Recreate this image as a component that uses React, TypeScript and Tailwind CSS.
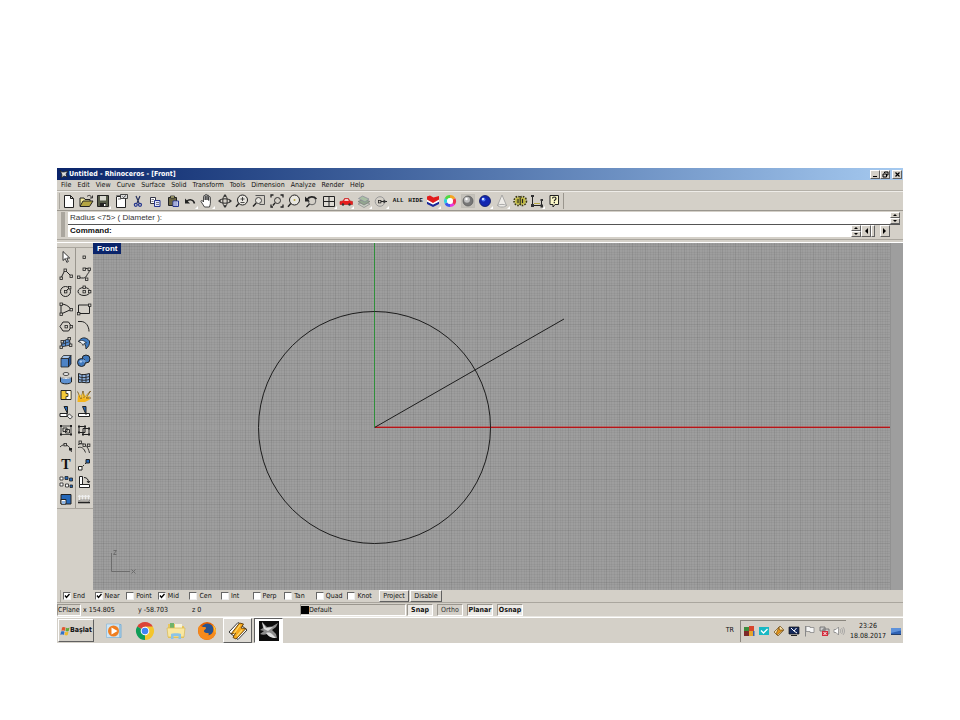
import type { ReactNode } from "react";

type Tool = { name: string; icon: ReactNode };

const menus = [
  "File",
  "Edit",
  "View",
  "Curve",
  "Surface",
  "Solid",
  "Transform",
  "Tools",
  "Dimension",
  "Analyze",
  "Render",
  "Help",
];

const snaps = [
  { name: "End", on: true },
  { name: "Near", on: true },
  { name: "Point", on: false },
  { name: "Mid", on: true },
  { name: "Cen", on: false },
  { name: "Int", on: false },
  { name: "Perp", on: false },
  { name: "Tan", on: false },
  { name: "Quad", on: false },
  { name: "Knot", on: false },
];

const raised =
  "border border-t-white border-l-white border-b-[#606060] border-r-[#606060] bg-[#d4d0c8]";
const sunken = "border border-t-[#9a968e] border-l-[#9a968e] border-b-white border-r-white";

const Icon = ({ children }: { children: ReactNode }) => (
  <svg viewBox="0 0 16 16" className="size-4 shrink-0" fill="none" stroke="#222" aria-hidden="true">
    {children}
  </svg>
);

// small square control point used by the curve tools
const Dot = ({ x, y }: { x: number; y: number }) => (
  <rect x={x - 1} y={y - 1} width="2.4" height="2.4" fill="#d4d0c8" stroke="#222" strokeWidth=".8" />
);

const Flyout = () => <path d="M16 13v3h-3z" fill="#fff" stroke="none" />;

const Lens = () => (
  <>
    <circle cx="8.5" cy="7" r="5" fill="#e8e6e0" />
    <path d="M4.800 10.500 2 13.800" strokeWidth="1.400" />
  </>
);

const mainTools: Tool[] = [
  { name: "New", icon: <path d="M3.500 2.500h6l3 3v9h-9zM9.500 2.500v3h3" fill="#fff" /> },
  {
    name: "Open",
    icon: (
      <>
        <path d="M2 13V5h4l1 1.500h5V8" fill="#f4ec9a" />
        <path d="M2 13.500 5 8h10l-3.500 5.500z" fill="#b5a642" />
        <path d="M9 3.500c2-2 4-1 4.500 1M14.500 2.500v2.500h-2.500" strokeWidth=".9" />
      </>
    ),
  },
  {
    name: "Save",
    icon: (
      <>
        <path d="M2.500 2.500h11v11h-11z" fill="#555a48" />
        <path d="M5 3h6v4.500H5z" fill="#d8d8d0" stroke="none" />
        <path d="M5 10h6v3.500H5z" fill="#222" stroke="none" />
        <path d="M9 11h1.500v2H9z" fill="#fff" stroke="none" />
        <Flyout />
      </>
    ),
  },
  {
    name: "Properties",
    icon: (
      <>
        <path d="M3.500 3.500h9v11h-9z" fill="#fff" />
        <path d="M3.500 4V2.500H7M5 6h3" stroke="#777" />
        <path d="M7.500 1.500h7v4h-7z" fill="#ddd" strokeWidth=".8" />
        <path d="m9.500 3.500 1 1 2.500-2" strokeWidth=".8" />
      </>
    ),
  },
  {
    name: "Cut",
    icon: (
      <>
        <path d="m6 3 3 7M10 3 7 10" stroke="#26305c" strokeWidth="1.200" />
        <circle cx="5.800" cy="11.800" r="1.500" stroke="#24358e" strokeWidth="1.200" />
        <circle cx="10" cy="11.800" r="1.500" stroke="#24358e" strokeWidth="1.200" />
      </>
    ),
  },
  {
    name: "Copy",
    icon: (
      <>
        <path d="M3.500 4.500h5v6h-5z" fill="#fff" stroke="#334" />
        <path d="M7.500 7.500h5.500v6H7.500z" fill="#dfe4ff" stroke="#24358e" />
        <path d="M9 9.500h3M9 11.500h3M4.500 6.500h2.500M4.500 8.500h2" stroke="#556" strokeWidth=".8" />
      </>
    ),
  },
  {
    name: "Paste",
    icon: (
      <>
        <path d="M3.500 4.500h8v8h-8z" fill="#6a6442" />
        <path d="M5.500 3h4v2h-4z" fill="#d9d48d" strokeWidth=".8" />
        <path d="M8 8h5.500v5.500H8z" fill="#e8ebff" stroke="#24358e" />
        <path d="M9 10h3.500M9 12h3.500" stroke="#24358e" strokeWidth=".7" />
      </>
    ),
  },
  {
    name: "Undo",
    icon: (
      <>
        <path d="M4.500 8.500c2.500-2.500 7-2.500 8 2" strokeWidth="1.500" />
        <path d="M3 5.500v5h5z" fill="#222" stroke="none" />
        <Flyout />
      </>
    ),
  },
  {
    name: "Pan",
    icon: (
      <>
        <path
          d="M5.500 14 2 8.500c0-1.500 1.500-1.200 2.500.5V3.500c0-1.300 1.700-1.300 1.700 0V7 2.300c0-1.300 1.800-1.300 1.800 0V7 3c0-1.300 1.700-1.300 1.700 0v4.500-3c0-1.200 1.700-1.200 1.700 0v6L10.500 14z"
          fill="#fff"
          strokeWidth=".8"
        />
        <Flyout />
      </>
    ),
  },
  {
    name: "Rotate view",
    icon: (
      <>
        <ellipse cx="8" cy="8" rx="5.500" ry="2.200" strokeWidth=".9" />
        <ellipse cx="8" cy="8" rx="2.200" ry="5" strokeWidth=".9" />
        <path d="m8 1 2 2.500H6zM8 15l2-2.500H6zM1 8l2.500-2v4zM15 8l-2.500-2v4z" fill="#333" stroke="none" />
      </>
    ),
  },
  {
    name: "Zoom dynamic",
    icon: (
      <>
        <Lens />
        <path d="M6.500 6h4M8.500 4v4M6.500 9.500h4" strokeWidth=".8" />
      </>
    ),
  },
  {
    name: "Zoom window",
    icon: (
      <>
        <path d="M4.500 2.500h9v9h-5" stroke="#555" />
        <circle cx="7.500" cy="7.500" r="3" fill="#e8e6e0" stroke="#444" />
        <path d="M5.200 10 2 13.500" strokeWidth="1.400" />
      </>
    ),
  },
  {
    name: "Zoom extents",
    icon: (
      <>
        <circle cx="8.500" cy="7.500" r="3" strokeWidth=".9" />
        <path d="M6 10 3.800 12.500" strokeWidth="1.300" />
        <path d="M2 4.500V2h2.500M11.500 2H14v2.500M14 11.500V14h-2.500M2 11.500V14h2" strokeWidth="1.300" />
      </>
    ),
  },
  {
    name: "Zoom selected",
    icon: (
      <>
        <Lens />
        <circle cx="8.500" cy="7" r="1" fill="#b5a642" stroke="none" />
      </>
    ),
  },
  {
    name: "Undo view change",
    icon: (
      <>
        <circle cx="9" cy="8" r="3.800" stroke="#666" />
        <path d="M6.500 11 3.500 14" strokeWidth="1.300" />
        <path d="M4 6.500C6 3 11 3 13.500 6" strokeWidth="1.500" />
        <path d="M2 3.500v5h5z" fill="#222" stroke="none" />
      </>
    ),
  },
  {
    name: "Four viewports",
    icon: (
      <>
        <path d="M2.500 3.500h11v10h-11zM8 3.500v10M2.500 8.500h11" fill="#dedbd4" />
        <Flyout />
      </>
    ),
  },
  {
    name: "Right view",
    icon: (
      <>
        <path d="M2 8.500 5 8l1.500-2.500h4L12 8l2.500.5v3H2z" fill="#e81c1c" stroke="#c01414" strokeWidth=".6" />
        <path d="M7 6.300h3l.8 1.500H6.200z" fill="#fff" stroke="none" />
        <circle cx="5" cy="11.500" r="1.200" fill="#333" stroke="none" />
        <circle cx="11.500" cy="11.500" r="1.200" fill="#333" stroke="none" />
        <Flyout />
      </>
    ),
  },
  {
    name: "Set CPlane",
    icon: (
      <>
        <path d="m2 11 6 3.500 6-3.500-6-2.500z" fill="#c9cfc4" stroke="#888" strokeWidth=".7" />
        <path d="m2 8.500 6 3.500 6-3.500L8 6z" fill="#92a68f" stroke="#777" strokeWidth=".7" />
        <path d="m2.500 5.500 4-2.500 6.500 3-4 3z" fill="#a9bfa4" stroke="#889" strokeWidth=".7" />
        <Flyout />
      </>
    ),
  },
  {
    name: "Object snap",
    icon: (
      <>
        <circle cx="7" cy="8.500" r="4.800" stroke="#999" />
        <path d="M6 8.500h8" />
        <Dot x={6.500} y={8.500} />
        <path d="m10.500 6.500 3 2-3 2z" fill="#333" stroke="none" />
        <Flyout />
      </>
    ),
  },
  { name: "ALL", icon: null },
  { name: "HIDE", icon: null },
  {
    name: "Layers",
    icon: (
      <>
        <path d="m2 8.500 6 3 6-3V11l-6 3-6-3z" fill="#1c2a99" stroke="none" />
        <path d="m2 6.500 6 3 6-3v2l-6 3-6-3z" fill="#fff" stroke="none" />
        <path d="m2 3.500 3-1 3.500 2 5.500-1.500v3.500L8 10 2 6.500z" fill="#e21c1c" stroke="none" />
        <Flyout />
      </>
    ),
  },
  {
    name: "Object color",
    icon: (
      <>
        <g strokeWidth="3">
          <path d="M8 3.500A4.500 4.500 0 0 1 12 6" stroke="#f5a623" />
          <path d="M12 6a4.500 4.500 0 0 1-.5 5" stroke="#f03050" />
          <path d="M11.500 11A4.500 4.500 0 0 1 8 12.500" stroke="#e838e0" />
          <path d="M8 12.500A4.500 4.500 0 0 1 4 10" stroke="#3c58f0" />
          <path d="M4 10a4.500 4.500 0 0 1 0-4" stroke="#28d0e0" />
          <path d="M4 6a4.500 4.500 0 0 1 4-2.500" stroke="#50d840" />
        </g>
        <circle cx="8" cy="8" r="3" fill="#fff" stroke="none" />
      </>
    ),
  },
  {
    name: "Shade",
    icon: (
      <>
        <path d="M1.500 1.500h13v13h-13z" fill="#c4c1ba" stroke="#b5b2ab" strokeDasharray="1 1" />
        <circle cx="8" cy="8" r="5" fill="#777" stroke="#555" strokeWidth=".7" />
        <circle cx="7" cy="6.800" r="3" fill="#c0c0c0" stroke="none" />
        <circle cx="6.500" cy="6" r="1.200" fill="#fff" stroke="none" />
      </>
    ),
  },
  {
    name: "Render",
    icon: (
      <>
        <circle cx="8" cy="8" r="5.500" fill="#1226b0" stroke="#0a1560" strokeWidth=".8" />
        <circle cx="6.500" cy="6.500" r="2" fill="#4c74f0" stroke="none" />
        <circle cx="6" cy="6" r="1" fill="#fff" stroke="none" />
        <Flyout />
      </>
    ),
  },
  {
    name: "Spotlight",
    icon: (
      <>
        <path d="M8 2 3.500 12.500c1.500 2 7.500 2 9 0z" fill="#eeece8" stroke="#999" strokeWidth=".8" />
        <path d="M3.500 12.500c2-1.500 7-1.500 9 0" stroke="#999" strokeWidth=".8" />
        <Flyout />
      </>
    ),
  },
  {
    name: "Options",
    icon: (
      <>
        <ellipse cx="6" cy="8" rx="3.500" ry="4" stroke="#3a3812" strokeWidth="2.500" strokeDasharray="1.500 1" />
        <ellipse cx="10.500" cy="8" rx="3.500" ry="4" stroke="#3a3812" strokeWidth="2.500" strokeDasharray="1.500 1" />
        <ellipse cx="6" cy="8" rx="2.800" ry="3.300" fill="#b5ae3c" stroke="#d4ce58" strokeWidth=".8" />
        <ellipse cx="10.500" cy="8" rx="2.800" ry="3.300" fill="#b5ae3c" stroke="#d4ce58" strokeWidth=".8" />
        <path d="M6 6v4M10.500 6v4M8.200 5v6" />
      </>
    ),
  },
  {
    name: "Dimension",
    icon: (
      <>
        <path d="M3.500 3v9.500H14M12.500 7v6" />
        <path d="M2 2h3v2H2zM2 11h3v3H2zM11.500 6H14v2h-2.500zM11.500 11.500H14v3h-2.500z" fill="#333" stroke="none" />
        <path d="M5 10.500h6" stroke="#b5a642" />
        <Flyout />
      </>
    ),
  },
  {
    name: "Help topics",
    icon: (
      <>
        <path d="M4 2.500h8.500v9H9L7 14v-2.500H4z" fill="#fbf8c8" />
        <path d="M6.500 5.500c0-2 3.500-2 3.500 0 0 1.300-1.700 1.200-1.700 2.700M8.300 9v1.300" strokeWidth="1.200" />
      </>
    ),
  },
];

const sideTools: Tool[] = [
  { name: "Select", icon: <path d="M5 2.500v9l2.300-2 1.500 3.800 1.500-.7L8.800 9h2.900z" fill="#fff" strokeWidth=".9" /> },
  { name: "Point", icon: <Dot x={8} y={8} /> },
  {
    name: "Polyline",
    icon: (
      <>
        <path d="M3 12 7 4l6 6" />
        <Dot x={3} y={12} />
        <Dot x={7} y={4} />
        <Dot x={13} y={10} />
      </>
    ),
  },
  {
    name: "Curve",
    icon: (
      <>
        <path d="M8 2.500c6-1 6 3 4 5s-1 6-9 4" />
        <Dot x={8} y={3} />
        <Dot x={13} y={3} />
        <Dot x={2.500} y={11} />
        <Dot x={10.500} y={13} />
      </>
    ),
  },
  {
    name: "Circle",
    icon: (
      <>
        <circle cx="7.500" cy="8.500" r="5" />
        <path d="m7.500 8.500 4-4" />
        <Dot x={7.500} y={8.500} />
        <Dot x={11.500} y={4.500} />
      </>
    ),
  },
  {
    name: "Ellipse",
    icon: (
      <>
        <ellipse cx="8" cy="8.500" rx="6" ry="4" />
        <Dot x={8} y={8.500} />
        <Dot x={8} y={4} />
        <Dot x={13.500} y={8.500} />
      </>
    ),
  },
  {
    name: "Arc",
    icon: (
      <>
        <path d="M3 3c4 0 8 2 10 5.500L3 13z" />
        <Dot x={3} y={3} />
        <Dot x={13} y={8.500} />
        <Dot x={3} y={13} />
      </>
    ),
  },
  {
    name: "Rectangle",
    icon: (
      <>
        <path d="M2.500 4h11v8.500h-11z" />
        <Dot x={13.500} y={4} />
        <Dot x={2.500} y={12.500} />
      </>
    ),
  },
  {
    name: "Polygon",
    icon: (
      <>
        <path d="M5 4h5.500l3 4.500-3 4.500H5L2 8.500z" />
        <Dot x={8} y={8.500} />
        <Dot x={13} y={8.500} />
      </>
    ),
  },
  { name: "Fillet curves", icon: <path d="M2 3.500h3c5 0 8 5 8 10" strokeWidth="1" /> },
  {
    name: "Surface",
    icon: (
      <>
        <path d="m4 6.500 7-3 1.500 6.500L3 12z" fill="#5b8fd0" strokeWidth=".8" />
        <path d="m3.500 9.500 8.500-3M7.500 5v6" strokeWidth=".7" />
        <Dot x={11} y={3.500} />
        <Dot x={4} y={6.500} />
        <Dot x={3} y={12} />
        <Dot x={12.500} y={10} />
      </>
    ),
  },
  {
    name: "Sweep",
    icon: (
      <>
        <path d="M2.500 6.500C5 2 10 1.500 13.500 6c.5 3-1 6-3.500 8 0-3-1-6-4-6.500z" fill="#3f7cc4" strokeWidth=".9" />
        <path d="M2.500 6.500c2.500-2 6-1 8 1.500-1.500-.5-3 .5-3.500 2.500C6 8 4.500 7 2.500 6.500z" fill="#eef3fa" strokeWidth=".7" />
      </>
    ),
  },
  {
    name: "Box",
    icon: (
      <>
        <path d="M3 5.500h7.500V14H3z" fill="#4d83c6" strokeWidth=".8" />
        <path d="m3 5.500 2.500-3h7.500l-2.500 3z" fill="#a9c8ec" strokeWidth=".8" />
        <path d="m10.500 5.500 2.500-3V11l-2.500 3z" fill="#1d4f96" strokeWidth=".8" />
      </>
    ),
  },
  {
    name: "Boolean union",
    icon: (
      <>
        <circle cx="10" cy="6" r="4" fill="#3f78bc" />
        <circle cx="5.500" cy="9.500" r="4" fill="#3f78bc" />
        <path d="m6.500 7 3 2" stroke="#6f9fd8" strokeWidth="2.500" />
        <circle cx="4.800" cy="8.500" r="1.300" fill="#a9c8ec" stroke="none" />
      </>
    ),
  },
  {
    name: "Cylinder surface",
    icon: (
      <>
        <path d="M2.500 7v5c2 2.500 9 2.500 11 0V7c-2 2-9 2-11 0z" fill="#5d91d1" />
        <path d="M2.500 7c2 2 9 2 11 0" stroke="#dfe9f5" />
        <ellipse cx="8" cy="4" rx="3" ry="1.500" fill="#eee" strokeWidth=".8" />
      </>
    ),
  },
  {
    name: "Mesh",
    icon: (
      <>
        <path d="M2.500 3.500c4 2 7 1 11 0v9c-4 1-7-1-11 0z" fill="#8fb3e0" />
        <path d="M2.500 6.500c4 2 7 1 11 0M2.500 9.500c4 1 7 1 11 0M6 4.500v8M10 4.500v8" strokeWidth=".9" />
      </>
    ),
  },
  {
    name: "Explode layout",
    icon: (
      <>
        <path d="M3 3.500h10v9H3z" fill="#f4c93a" />
        <path d="M8 4h4.500v8H8V9.500h2v-3H8z" fill="#fff" stroke="none" />
        <path d="M8 4v2.500h2v3H8V12" strokeWidth=".8" />
      </>
    ),
  },
  {
    name: "Explode",
    icon: (
      <>
        <path d="m1.500 15 .5-7 4 3 2-5 1.500 4 5-1-2 2 1.500 1.500L9 15z" fill="#f5b51c" stroke="none" />
        <path d="M1.500 4.500 5 12l2-8 1 7 6.500-7L10 11h5" stroke="#6a4a10" strokeWidth=".8" />
        <path d="m2.500 6 2.500 6 2-7 1 6 4.500-5L9.500 12z" fill="#f9c83c" stroke="none" />
      </>
    ),
  },
  {
    name: "Trim",
    icon: (
      <>
        <path d="M2 8.500h7v3H2z" fill="#fff" />
        <path d="M6 1.500h3.500v7z" fill="#2467b8" />
        <path d="m9 11 2.500-2 3 3-2.500 2z" fill="#eee" strokeWidth=".8" />
      </>
    ),
  },
  {
    name: "Split",
    icon: (
      <>
        <path d="M2.500 8.500h11v3h-11z" fill="#fff" />
        <path d="M6.500 1.500H10v8z" fill="#2467b8" />
      </>
    ),
  },
  {
    name: "Group",
    icon: (
      <>
        <path d="M3 4h10v8.500H3z" strokeWidth=".8" />
        <path d="M5 6h4v3.500H5zM7.500 7.500h4v3.500h-4z" strokeWidth=".9" />
        <path d="M2 3h2v2H2zM12 3h2v2h-2zM2 11.500h2v2H2zM12 11.500h2v2h-2z" fill="#222" stroke="none" />
      </>
    ),
  },
  {
    name: "Ungroup",
    icon: (
      <>
        <path d="M3 4.500h6v6H3zM7 6.500h6v6H7z" />
        <path d="M2 3.500h2v2H2zM8 3.500h2v2H8zM2 9.500h2v2H2zM12 5.500h2v2h-2zM12 11.500h2v2h-2zM6 11.500h2v2H6z" fill="#222" stroke="none" />
      </>
    ),
  },
  {
    name: "Edit points",
    icon: (
      <>
        <path d="M2 8c4-4.500 10-2 11.500 5" strokeWidth=".9" />
        <Dot x={7} y={5.500} />
        <path d="M11 9h3v2.500h-3z" fill="#222" stroke="none" />
      </>
    ),
  },
  {
    name: "Control points",
    icon: (
      <>
        <path d="M2 5.500C8 3 12 7 13.500 14M2 8.500c4-1 6 1 7.500 5" strokeWidth=".9" />
        <Dot x={4} y={3} />
        <Dot x={8} y={6} />
        <Dot x={12.500} y={6} />
      </>
    ),
  },
  { name: "Text", icon: null },
  {
    name: "Move",
    icon: (
      <>
        <path d="M4 12 12 4" strokeDasharray="2 1.500" />
        <path d="M2.500 9.500H6V13H2.500z" fill="#fff" />
        <path d="M10 2.500h3.500V6H10z" fill="#2467b8" />
      </>
    ),
  },
  {
    name: "Array",
    icon: (
      <>
        <path d="M2 3h3v3H2zM7.500 10h3v3h-3zM2 9h3v3H2z" fill="#fff" strokeWidth=".8" />
        <path d="M7 2.500h3v3H7zM11.500 4h3v3h-3zM12 11h2.500v2.500H12z" fill="#2467b8" strokeWidth=".8" />
      </>
    ),
  },
  {
    name: "Orient",
    icon: (
      <>
        <path d="M3.500 2.500h3v8h-3z" fill="#fff" />
        <path d="M3.500 10.500h10v3h-10z" fill="#fff" />
        <path d="M8 3.500c3 0 4.500 2 4.500 5M11 7l1.500 2L14 7" />
      </>
    ),
  },
  {
    name: "Align",
    icon: (
      <>
        <path d="M3 3.500h10v9.500H3z" fill="#2467b8" />
        <path d="M3 8.500h5V13H3z" fill="#fff" />
        <path d="M4 10h3v3H4z" fill="#8fb6e4" stroke="none" />
      </>
    ),
  },
  {
    name: "Project to plane",
    icon: (
      <>
        <path d="M3.500 4v5M6.500 4v5M9.500 4v5M12.500 4v5M2 6l1.500-2L5 6l1.500-2L8 6l1.500-2L11 6l1.500-2L14 6" stroke="#eee" />
        <path d="M2 11.500h12" strokeWidth="1.600" />
        <path d="m2 10 3-1h9l-2 2" stroke="#777" strokeWidth=".7" />
      </>
    ),
  },
];

const ToolButton = ({ tool }: { tool: Tool }) => (
  <button type="button" aria-label={tool.name} className="flex min-w-0 items-center justify-center overflow-hidden">
    {tool.icon ? (
      <Icon>{tool.icon}</Icon>
    ) : tool.name === "Text" ? (
      <span className="font-['Liberation_Serif',serif] text-[14px] font-bold leading-4">T</span>
    ) : (
      <span className="font-['Liberation_Mono',monospace] text-[6px] font-bold leading-3">{tool.name}</span>
    )}
  </button>
);

const TitleBar = () => (
  <header className="flex h-3 items-center bg-linear-to-r from-[#0a246a] to-[#a6caf0] pr-px pl-0.5 text-white">
    <svg viewBox="0 0 10 10" className="size-[10px]" aria-hidden="true">
      <path d="M1 1c1 2 2 2 4 2l4-1-2 3 1 3-3-1-3 2 1-3z" fill="#ddd" stroke="#222" strokeWidth=".8" />
    </svg>
    <h1 className="flex-1 text-[7px] font-bold leading-3">Untitled - Rhinoceros - [Front]</h1>
    <button type="button" aria-label="Minimize" className={`${raised} flex h-[9px] w-[10px] items-end justify-center pb-px`}>
      <span className="h-px w-1 bg-black" />
    </button>
    <button type="button" aria-label="Restore" className={`${raised} mr-0.5 flex h-[9px] w-[10px] items-center justify-center`}>
      <svg viewBox="0 0 7 7" className="size-[7px]" fill="none" stroke="#000" aria-hidden="true">
        <path d="M2.500 2V1h3.500v3H5M1 3h3.500v3H1z" />
      </svg>
    </button>
    <button type="button" aria-label="Close" className={`${raised} flex h-[9px] w-[10px] items-center justify-center`}>
      <svg viewBox="0 0 7 7" className="size-[7px]" stroke="#000" aria-hidden="true">
        <path d="m1.500 1.500 4 4M5.500 1.500l-4 4" strokeWidth="1.200" />
      </svg>
    </button>
  </header>
);

const Spinner = () => (
  <div className="flex h-full w-[10px] flex-col">
    {["M1 3h4L3 1z", "M1 1h4L3 3z"].map((d, i) => (
      <button
        key={d}
        type="button"
        aria-label={i === 0 ? "Scroll up" : "Scroll down"}
        className={`${raised} flex flex-1 items-center justify-center`}
      >
        <svg viewBox="0 0 6 4" className="h-1 w-1.5" aria-hidden="true">
          <path d={d} />
        </svg>
      </button>
    ))}
  </div>
);

const CommandArea = () => (
  <section className="flex h-[28px] border-t border-[#9a968e] py-px pr-[3px] pl-1 font-['Liberation_Sans',Arial,sans-serif] text-[8px]">
    <div className="mr-[3px] w-1 bg-[#aaa69e]" />
    <div className="flex min-w-0 flex-1 flex-col">
      <div className="flex h-[13px] border-b border-[#555]">
        <p className="flex-1 bg-white pl-0.5 leading-3 text-[#333]">Radius &lt;75&gt; ( Diameter ):</p>
        <Spinner />
      </div>
      <div className="mr-[10px] flex h-3">
        <label className="bg-white pl-0.5 font-bold leading-[11px]" htmlFor="command">
          Command:
        </label>
        <input id="command" className="min-w-0 flex-1 bg-white px-1 outline-none" />
        <Spinner />
        <button type="button" aria-label="Scroll left" className={`${raised} flex w-[10px] items-center justify-center`}>
          <svg viewBox="0 0 4 6" className="h-1.5 w-1" aria-hidden="true">
            <path d="M4 0v6L1 3z" />
          </svg>
        </button>
        <div className={`${raised} mr-[5px] w-1`} />
        <button type="button" aria-label="Scroll right" className={`${raised} flex w-[10px] items-center justify-center`}>
          <svg viewBox="0 0 4 6" className="h-1.5 w-1" aria-hidden="true">
            <path d="M0 0v6l3-3z" />
          </svg>
        </button>
      </div>
    </div>
  </section>
);

const ORIGIN = { x: 281, y: 184 };
const CELL = 2.58;

// five minor divisions to each major one, counted outwards from the origin
const gridPath = (major: boolean) => {
  let d = "";
  for (let i = -108; i <= 200; i++) {
    if ((i % 5 === 0) === major) d += `M${Math.round(ORIGIN.x + i * CELL) + 0.5} 0V347`;
  }
  for (let i = -71; i <= 63; i++) {
    // the x axis takes the place of the line through the origin
    if (i !== 0 && (i % 5 === 0) === major) d += `M0 ${Math.round(ORIGIN.y + i * CELL) + 0.5}H797`;
  }
  return d;
};

const Viewport = () => (
  <main className="relative h-[347px] min-w-0 flex-1 bg-[#9e9e9e]">
    <svg viewBox="0 0 810 347" className="size-full" preserveAspectRatio="xMinYMin slice" fill="none">
      <path d={gridPath(false)} stroke="#000" strokeOpacity=".035" />
      <path d={gridPath(true)} stroke="#000" strokeOpacity=".08" />
      <path d="M281.500 0v184" stroke="#2f8f3a" />
      <path d="M282 184H797" stroke="#c81818" strokeWidth="2" strokeOpacity=".4" />
      <path d="M282 184.500H797" stroke="#b81418" />
      <circle cx="281.500" cy="184.500" r="116" stroke="#1c1c1c" />
      <path d="M281.500 184.500 471 76" stroke="#1c1c1c" />
      <path d="M18.500 310v18.500H37" stroke="#6c6c6c" />
      <path d="M20.500 307.500h3l-3 4h3M38.500 326.500l4 4M42.500 326.500l-4 4" stroke="#6c6c6c" />
    </svg>
    <h2 className="absolute top-0 left-0 bg-[#0a246a] px-1 font-['Liberation_Sans',Arial,sans-serif] text-[8px] font-bold leading-[11px] text-white">
      Front
    </h2>
  </main>
);

const SnapBar = () => (
  <form className="flex h-[13px] items-center border-b border-[#aaa69e] pl-[3px] text-[7px]">
    <div className="mr-0.5 h-3 w-px bg-[#aaa69e]" />
    <div className="grid w-[316px] grid-cols-10">
      {snaps.map((snap) => (
        <label key={snap.name} className="relative flex items-center gap-0.5 leading-3">
          <input
            type="checkbox"
            defaultChecked={snap.on}
            className="peer size-2 appearance-none border border-t-[#666] border-r-[#eee] border-b-[#eee] border-l-[#666] bg-white"
          />
          <svg viewBox="0 0 8 8" className="pointer-events-none absolute left-0 hidden size-2 peer-checked:block" fill="none" stroke="#000" aria-hidden="true">
            <path d="m2 3.500 1.500 2L6.500 2" strokeWidth="1.300" />
          </svg>
          {snap.name}
        </label>
      ))}
    </div>
    <button type="button" className={`${raised} h-3 w-[30px] leading-[10px]`}>
      Project
    </button>
    <button type="button" className={`${raised} ml-px h-3 w-8 leading-[10px]`}>
      Disable
    </button>
  </form>
);

const StatusBar = () => (
  <div className="flex h-[14px] items-center border-b border-[#e9e7e2] pt-px text-[7px] leading-[10px]">
    <span className={`${sunken} w-6`}>CPlane</span>
    <span className="w-[55px] pl-0.5">x 154.805</span>
    <span className="w-[54px] pl-0.5">y -58.703</span>
    <span className="w-[110px] pl-0.5">z 0</span>
    <button type="button" className={`${sunken} mr-px flex w-[106px] items-center`}>
      <span className="size-2 bg-black" />
      Default
    </button>
    <div className="grid grid-cols-4 gap-1">
      {["Snap", "Ortho", "Planar", "Osnap"].map((name) => (
        <button
          key={name}
          type="button"
          className={`${sunken} w-[26px] ${name === "Ortho" ? "text-[#333]" : "bg-[#ebe9e5] font-bold"}`}
        >
          {name}
        </button>
      ))}
    </div>
  </div>
);

const PinnedButton = ({ name, className = "", children }: { name: string; className?: string; children: ReactNode }) => (
  <button type="button" aria-label={name} className={`flex h-[25px] items-center justify-center border ${className}`}>
    <svg viewBox="0 0 20 20" className="size-5" fill="none" aria-hidden="true">
      {children}
    </svg>
  </button>
);

const TrayIcon = ({ children }: { children: ReactNode }) => (
  <svg viewBox="0 0 12 12" className="size-3" fill="none" aria-hidden="true">
    {children}
  </svg>
);

const Taskbar = () => (
  <footer className="flex h-[26px] items-center border-t border-white text-[7px]">
    <button type="button" className={`${raised} ml-px flex h-[23px] w-9 items-center justify-center font-bold`}>
      <svg viewBox="0 0 10 10" className="size-[10px] shrink-0" aria-hidden="true">
        <path d="M2 1.500c1.500-1 2.500-.5 3.500 0L4.800 5c-1-.5-2-.7-3.300 0z" fill="#e2552d" />
        <path d="M6 1.800c1 .5 2 .6 3.500-.2L8.700 5c-1 .7-2.200.5-3.200 0z" fill="#63a83c" />
        <path d="M1 5.700c1-.7 2.500-.5 3.500 0L3.800 9c-1-.5-2-.7-3.500 0z" fill="#3270c8" />
        <path d="M5.200 5.800c1 .5 2 .6 3.300 0L7.700 9c-1 .7-2 .5-3.200 0z" fill="#f0b92c" />
      </svg>
      Başlat
    </button>
    <nav className="ml-1 grid w-[186px] grid-cols-6">
      <PinnedButton name="Media Player" className="border-transparent">
        <path d="M5 3.500h12v13H5z" fill="#a9d0ea" stroke="#7db0d4" />
        <path d="M2.500 3h13v13.500h-13z" fill="#cfe5f4" stroke="#8ab9da" strokeWidth=".7" />
        <circle cx="9.500" cy="10" r="5.500" fill="#ef7e21" />
        <path d="m7.500 6.500 6 3.500-6 3.500z" fill="#fff" />
      </PinnedButton>
      <PinnedButton name="Chrome" className="border-transparent">
        <path d="M10 10 2.200 5.500a9 9 0 0 1 15.600 0z" fill="#db4437" />
        <path d="M10 10 2.200 5.500A9 9 0 0 0 10 19l3.500-7z" fill="#0f9d58" />
        <path d="M10 10 10 19a9 9 0 0 0 7.800-13.500H10z" fill="#f4c52c" />
        <circle cx="10" cy="10" r="4.300" fill="#fff" />
        <circle cx="10" cy="10" r="3.300" fill="#4285f4" />
      </PinnedButton>
      <PinnedButton name="Explorer" className="border-transparent">
        <path d="M2 3h7l1 2h8v12H2z" fill="#e9c75c" />
        <path d="M4 2h4v6H4z" fill="#6fb36a" />
        <path d="M9 3h7v6H9z" fill="#f7f3d8" />
        <path d="M1 7h18l-1 9H2z" fill="#f9e7a0" stroke="#d7b854" strokeWidth=".7" />
        <path d="M5 18v-5c0-1 10-1 10 0v5h-2.500v-3h-5v3z" fill="#8cc4e6" />
      </PinnedButton>
      <PinnedButton name="Firefox" className="border-transparent">
        <circle cx="10" cy="10" r="9" fill="#e66000" />
        <circle cx="10.500" cy="8.500" r="6" fill="#28528f" />
        <path d="M1.500 6C3 3 4 6 7 6c2 0 3 1 1 2.500-2 1-1 3.500 1.500 3.500 3 0 3 1.500 1 2.500 4 0 6-3 6-6.500 0-2-1-4-2.500-5C18 4 20 9 18.500 13 16 20 5 21 2 14 1 11 1 8 1.500 6z" fill="#f58a1c" />
        <path d="M16 4c3 3 3 6 2 9 0-3-1-5-2-9z" fill="#ffd23c" />
      </PinnedButton>
      <PinnedButton
        name="Winamp"
        className="mx-px border-t-white border-r-[#606060] border-b-[#606060] border-l-white bg-[#dedbd5]"
      >
        <path d="m1 11 9-9.500L19 9l-9 9.500z" fill="#fff" stroke="#333" />
        <path d="m3 13 8.500-11 4 1-2.500 4 5 .5L8 18l-3-1.500L7.500 12z" fill="#f6a81c" stroke="#5a3a08" strokeWidth=".9" />
        <path d="M6 12.500 12 4M9 15l5-6" stroke="#ffd866" strokeWidth="1.300" />
      </PinnedButton>
      <PinnedButton
        name="Rhinoceros"
        className="mx-px border-t-[#606060] border-r-white border-b-white border-l-[#606060] bg-white"
      >
        <path d="M0 0h20v20H0z" fill="#0c0c0c" />
        <path d="m3 1 5 5 5-.5 6-3.500-2 4-4 3 4 4 1 4c-5 0-8-2-10-4-2 1-5 1-7 0l4-3-4-1 3-2z" fill="#8c8c8c" />
        <path d="m3 1 4 6 7-1-5 4-4-2zM7 12c3-1 5 0 6 1l4 4c-5 0-8-2-10-5z" fill="#dedede" />
      </PinnedButton>
    </nav>
    <div className="ml-auto flex h-full items-center">
      <span className="mr-1.5">TR</span>
      <div className="flex h-[22px] items-center gap-[3px] border-t border-l border-[#8a867e] pr-px pl-0.5">
        <TrayIcon>
          <path d="M1 2h5v4H1z" fill="#3c8c3c" />
          <path d="M6 1h5v5H6z" fill="#d8452c" />
          <path d="M1 6h5v5H1z" fill="#7d2a2a" />
          <path d="M6 6h4v5H6z" fill="#e6a52c" />
          <path d="M10 6h1.500v5H10z" fill="#3b62b6" />
        </TrayIcon>
        <TrayIcon>
          <path d="M1 2h10v8H1z" fill="#18b8c4" />
          <path d="m3 5.500 2.500 2.500L9.500 4" stroke="#fff" strokeWidth="1.300" />
        </TrayIcon>
        <TrayIcon>
          <path d="m1 7 6-6 4 4-6 6z" fill="#f6dfa8" stroke="#7a5a28" strokeWidth=".8" />
          <path d="m3 9 3-7 .5 3H10l-6 5z" fill="#e8971c" stroke="#6a4208" strokeWidth=".6" />
        </TrayIcon>
        <TrayIcon>
          <path d="M1 2h10v7H1z" fill="#162a5c" stroke="#111" strokeWidth=".7" />
          <path d="M3 10.500h6" stroke="#222" />
          <path d="m3 3 3 3M8.500 3 6 6l3 2" stroke="#fff" />
        </TrayIcon>
        <TrayIcon>
          <path d="M2.500 1v10.500" stroke="#888" />
          <path d="M3 1.500h4v1h4v5H7v-1H3z" fill="#f5f5f5" stroke="#888" strokeWidth=".8" />
        </TrayIcon>
        <TrayIcon>
          <path d="M2 2h5v4H2zM5 4h6v5H5z" fill="#ccc" stroke="#666" strokeWidth=".8" />
          <path d="M4 6h6v5H4z" fill="#d22c3c" />
          <path d="m5.500 7 3 3M8.500 7l-3 3" stroke="#fff" />
        </TrayIcon>
        <TrayIcon>
          <path d="M1 4.500h2L5.500 2v8L3 7.500H1z" fill="#fff" stroke="#888" strokeWidth=".8" />
          <path d="M7 4c1 1.500 1 2.500 0 4M8.500 3c1.500 2 1.500 4 0 6M10 2c2 2.500 2 5.500 0 8" stroke="#999" strokeWidth=".7" />
        </TrayIcon>
      </div>
      <time className="w-11 text-center leading-[10px]" dateTime="2017-08-18T23:26">
        23:26
        <br />
        18.08.2017
      </time>
      <button type="button" aria-label="Show desktop" className="mr-px">
        <TrayIcon>
          <path d="M1 3h10v6H1z" fill="#2f62b4" />
          <path d="M1 3h10v2.500L1 8z" fill="#5f92da" />
          <path d="M1 9.500h10" stroke="#23406e" />
        </TrayIcon>
      </button>
    </div>
  </footer>
);

const App = () => (
  <div className="min-h-screen bg-white px-[57px] pt-[168px] pb-10 font-['DejaVu_Sans_Condensed','Liberation_Sans',sans-serif]">
    <div className="bg-[#d4d0c8] text-[#111]">
      <TitleBar />
      <nav className="flex h-[11px] items-center gap-1.5 border-b border-[#b4b0a8] pl-1 text-[7px]">
        {menus.map((menu) => (
          <button key={menu} type="button" className="leading-[10px]">
            {menu}
          </button>
        ))}
      </nav>
      <div className="flex h-[19px] items-center border-t border-[#eeece8] pl-0.5">
        <div className="h-4 w-px bg-[#aaa69e]" />
        <div className="grid w-[504px] grid-cols-[repeat(29,minmax(0,1fr))] border-r border-[#9a968e]">
          {mainTools.map((tool) => (
            <ToolButton key={tool.name} tool={tool} />
          ))}
        </div>
      </div>
      <CommandArea />
      <div className="mt-px h-1 border-t border-b border-t-[#aaa69e] border-b-white" />
      <div className="flex">
        <aside className="w-9 shrink-0">
          <div className="relative mt-1 grid h-[262px] grid-cols-2 grid-rows-[repeat(15,minmax(0,1fr))] border-t border-b border-[#aaa69e]">
            {sideTools.map((tool) => (
              <ToolButton key={tool.name} tool={tool} />
            ))}
            <div className="absolute inset-y-0 left-1/2 w-px bg-[#9a968e]" />
          </div>
        </aside>
        <Viewport />
      </div>
      <SnapBar />
      <StatusBar />
      <Taskbar />
    </div>
  </div>
);

export default App;
